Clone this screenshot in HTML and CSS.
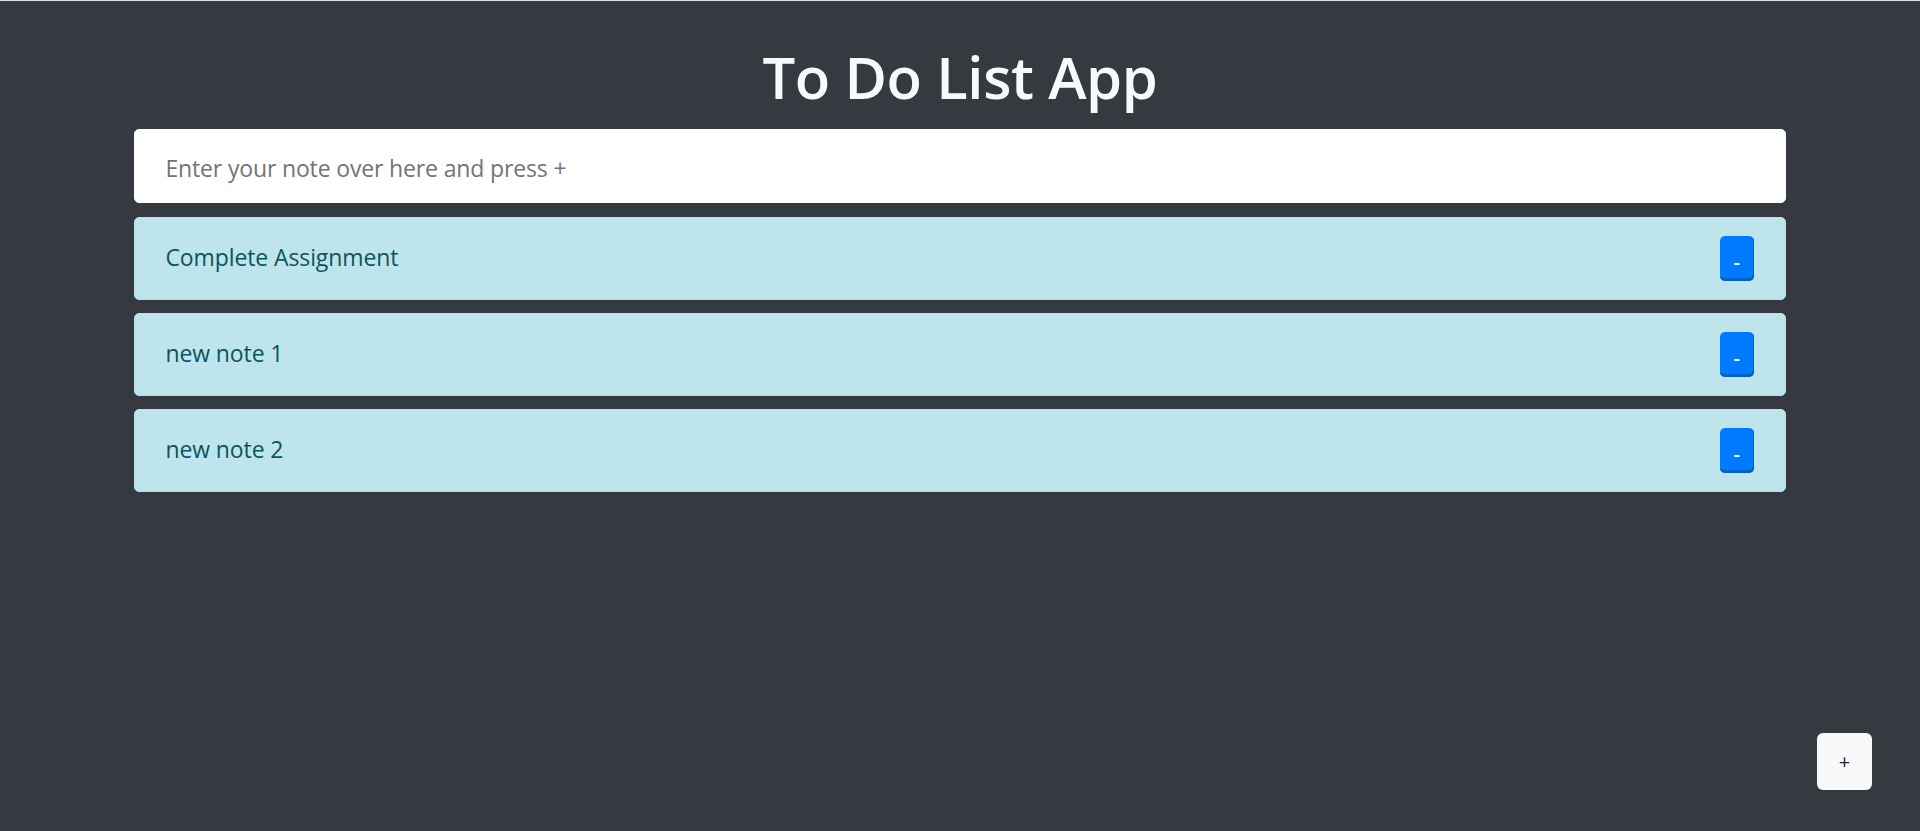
FILE: index.html
```html
<!DOCTYPE html>
<html lang="en">
<head>
<meta charset="utf-8">
<title>To Do List App</title>
<link rel="stylesheet" href="styles.css">
</head>
<body>
<main class="app">
  <h1 class="title">To Do List App</h1>
  <input class="note-input" type="text" placeholder="Enter your note over here and press +">
  <ul class="notes">
    <li class="note"><span class="note-text">Complete Assignment</span><button class="remove">-</button></li>
    <li class="note"><span class="note-text">new note 1</span><button class="remove">-</button></li>
    <li class="note"><span class="note-text">new note 2</span><button class="remove">-</button></li>
  </ul>
</main>
<button class="add">+</button>
</body>
</html>
```

FILE: styles.css
```css
* { box-sizing: border-box; }
html, body { height: 100%; }
body {
  margin: 0;
  background: #343a40;
  border-top: 1px solid #dfe2e6;
  font-family: "Open Sans", "Noto Sans", "Liberation Sans", sans-serif;
  overflow: hidden;
}
.app {
  width: 86%;
  margin: 0 auto;
  display: flex;
  flex-direction: column;
}
.title {
  margin: 40px 0 16px;
  text-align: center;
  color: #f8f9fa;
  font-size: 58px;
  font-weight: 600;
  letter-spacing: -0.4px;
  line-height: 72px;
}
.note-input {
  height: 74px;
  width: 100%;
  border: 1px solid #ffffff;
  border-radius: 5px;
  background: #ffffff;
  padding: 3px 30px 0;
  font-family: inherit;
  font-size: 23px;
  letter-spacing: -0.15px;
  color: #495057;
  outline: none;
}
.note-input::placeholder { color: #6f757b; }
.notes {
  list-style: none;
  margin: 14px 0 0;
  padding: 0;
  display: flex;
  flex-direction: column;
  gap: 13px;
}
.note {
  height: 83px;
  display: flex;
  align-items: center;
  justify-content: space-between;
  padding: 0 31px 0 30px;
  background: #bee5eb;
  border: 1px solid #b2e0e7;
  border-radius: 5px;
  color: #0c5460;
  font-size: 23px;
  letter-spacing: -0.1px;
}
.note-text { padding-bottom: 4px; }
.remove {
  width: 34px;
  height: 45px;
  border: none;
  border-radius: 5px;
  background: #007bff;
  box-shadow: inset -1px -3px 0 #0062cc;
  color: #ffffff;
  font-family: inherit;
  font-size: 20px;
  font-weight: 600;
  padding: 6px 0 0;
  cursor: pointer;
}
.add {
  position: fixed;
  right: 48px;
  bottom: 41px;
  width: 55px;
  height: 57px;
  border: none;
  border-radius: 6px;
  background: #f8f9fa;
  color: #212529;
  font-family: inherit;
  font-size: 20px;
  padding: 0;
}
```
